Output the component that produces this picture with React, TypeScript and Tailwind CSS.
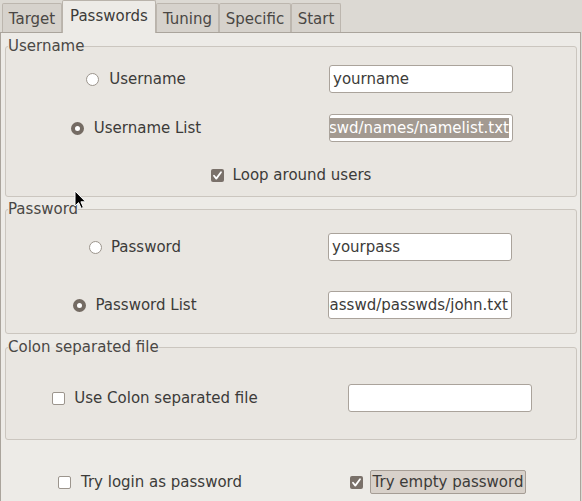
import React from 'react';

function Radio({ checked }: { checked?: boolean }) {
  return checked ? (
    <span className="w-[13px] h-[13px] rounded-full border-[4px] border-[#746b63] bg-white shrink-0" />
  ) : (
    <span className="w-[13px] h-[13px] rounded-full border border-[#9c958d] bg-white shrink-0" />
  );
}

function Check({ checked }: { checked?: boolean }) {
  if (!checked) {
    return <span className="w-[13px] h-[13px] rounded-[2px] border border-[#9c958d] bg-white shrink-0" />;
  }
  return (
    <span className="w-[13px] h-[13px] rounded-[2px] bg-[#7a716a] shrink-0 flex items-center justify-center">
      <svg width="11" height="11" viewBox="0 0 11 11" fill="none">
        <path d="M2 5.8 L4.3 8.6 L9 2.2" stroke="white" strokeWidth="1.8" strokeLinecap="round" strokeLinejoin="round" />
      </svg>
    </span>
  );
}

function Input({ children, end }: { children?: React.ReactNode; end?: boolean }) {
  return (
    <div
      className={`w-[184px] h-[28px] bg-white border border-[#aaa39b] rounded-[3px] flex items-center overflow-hidden px-[3px] ${
        end ? 'justify-end' : 'justify-start'
      }`}
    >
      {children}
    </div>
  );
}

function Frame({ title, className, children }: { title: string; className: string; children: React.ReactNode }) {
  return (
    <fieldset className={`border border-[#cbc6bf] rounded-[3px] bg-[#e9e6e1] ml-[4px] mr-[3px] ${className}`}>
      <legend className="ml-[2px] leading-[18px] text-[#4a4845]">{title}</legend>
      {children}
    </fieldset>
  );
}

const tabs = [
  { label: 'Target', w: 'w-[60px]' },
  { label: 'Passwords', w: 'w-[94px]', active: true },
  { label: 'Tuning', w: 'w-[63px]' },
  { label: 'Specific', w: 'w-[72px]' },
  { label: 'Start', w: 'w-[50px]' },
];

export default function App() {
  return (
    <div className="w-[582px] h-[501px] overflow-hidden bg-[#dcd9d3] relative font-['DejaVu_Sans',sans-serif] text-[15px] text-[#3c3b39]">
      {/* Tab bar */}
      <div className="h-[32px] flex items-end pl-[2px]">
        {tabs.map(t =>
          t.active ? (
            <div
              key={t.label}
              className={`${t.w} h-[33px] -mb-px z-10 relative bg-[#edebe7] border border-b-0 border-[#b9b3ab] rounded-t-[2px] flex items-start justify-center pt-[4px]`}
            >
              {t.label}
            </div>
          ) : (
            <div
              key={t.label}
              className={`${t.w} h-[29px] bg-[#d6d2cc] border border-b-0 border-[#bcb6ae] rounded-t-[2px] flex items-center justify-center pt-[2px] text-[#4a4744]`}
            >
              {t.label}
            </div>
          )
        )}
      </div>

      {/* Panel */}
      <div className="w-[581px] h-[470px] bg-[#edebe7] border border-[#aaa49c] border-b-0 pt-[4px]">
        <Frame title="Username" className="h-[160px]">
          <div className="grid grid-cols-[260px_1fr] mt-[10px]">
            <div className="h-[28px] flex items-center justify-center gap-[10px]">
              <Radio />
              <span>Username</span>
            </div>
            <div className="flex justify-center">
              <Input>
                <span className="whitespace-nowrap">yourname</span>
              </Input>
            </div>
            <div className="h-[29px] mt-[21px] flex items-center justify-center gap-[10px]">
              <Radio checked />
              <span>Username List</span>
            </div>
            <div className="mt-[21px] flex justify-center">
              <Input end>
                <span className="whitespace-nowrap shrink-0 bg-[#a39a91] text-white leading-[20px]">
                  /home/user/passwd/names/namelist.txt
                </span>
              </Input>
            </div>
          </div>
          <div className="h-[20px] mt-[22px] flex items-center justify-center gap-[9px]">
            <Check checked />
            <span>Loop around users</span>
          </div>
        </Frame>

        <Frame title="Password" className="h-[134px] mt-[3px]">
          <div className="grid grid-cols-[258px_1fr] mt-[15px]">
            <div className="h-[28px] flex items-center justify-center gap-[9px]">
              <Radio />
              <span>Password</span>
            </div>
            <div className="flex justify-center">
              <Input>
                <span className="whitespace-nowrap">yourpass</span>
              </Input>
            </div>
            <div className="h-[28px] mt-[30px] flex items-center justify-center gap-[9px]">
              <Radio checked />
              <span>Password List</span>
            </div>
            <div className="mt-[30px] flex justify-center">
              <Input end>
                <span className="whitespace-nowrap shrink-0">/home/user/passwd/passwds/john.txt</span>
              </Input>
            </div>
          </div>
        </Frame>

        <Frame title="Colon separated file" className="h-[102px] mt-[4px]">
          <div className="grid grid-cols-[298px_1fr] mt-[28px]">
            <div className="h-[28px] flex items-center justify-center gap-[9px]">
              <Check />
              <span>Use Colon separated file</span>
            </div>
            <div className="flex justify-center">
              <Input />
            </div>
          </div>
        </Frame>

        <div className="grid grid-cols-[298px_1fr] mr-[3px] mt-[30px]">
          <div className="h-[24px] flex items-center justify-center gap-[10px]">
            <Check />
            <span>Try login as password</span>
          </div>
          <div className="h-[24px] flex items-center justify-center gap-[7px]">
            <Check checked />
            <span className="h-[24px] px-[2px] flex items-center bg-[#d8d1ca] border border-[#a59d95] rounded-[2px]">
              Try empty password
            </span>
          </div>
        </div>
      </div>

      {/* Mouse pointer */}
      <svg className="absolute left-[74px] top-[190px]" width="13" height="20" viewBox="0 0 13 20">
        <path d="M1 1 L1 16 L4.6 12.6 L7.2 18.4 L9.4 17.4 L6.9 11.8 L11.6 11.8 Z" fill="black" stroke="white" strokeWidth="1" />
      </svg>
    </div>
  );
}
